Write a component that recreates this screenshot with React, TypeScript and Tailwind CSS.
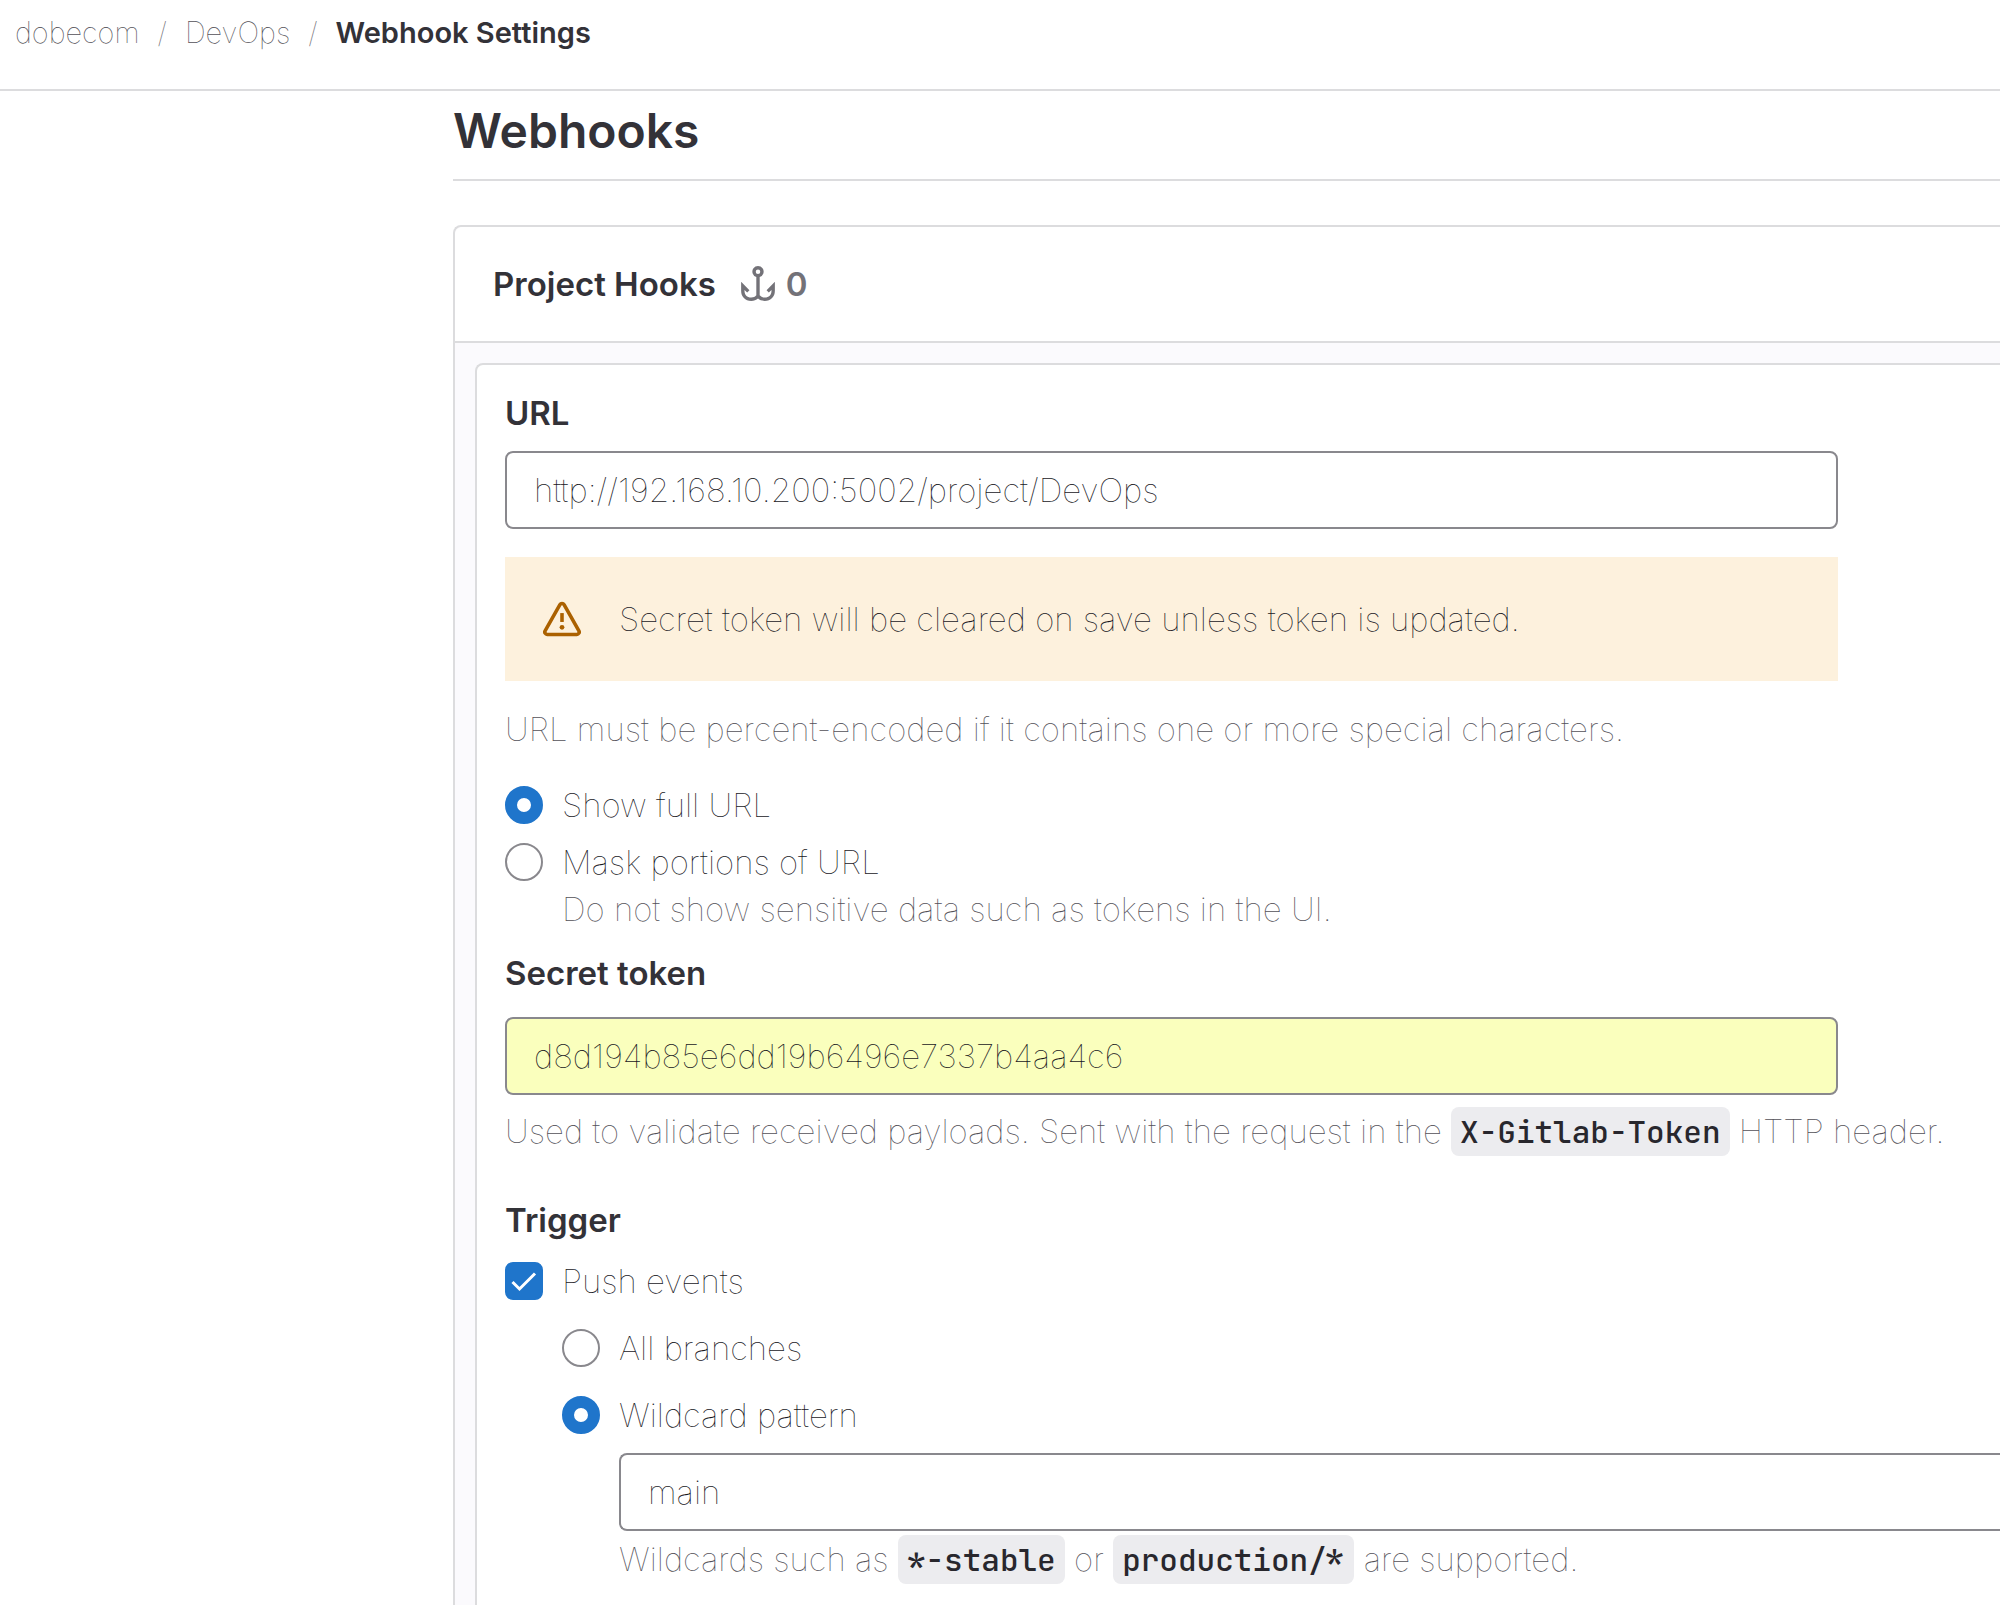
import { useState } from "react";
import type { ReactNode } from "react";

type ChoiceProps = {
  id: string;
  label: string;
  checked: boolean;
  onChange: () => void;
};

const INPUT =
  "block h-[78px] w-full border-2 border-[#89888d] px-[27px] text-[33px] font-thin text-[#18171d] outline-none";

/* ---------------- ICONS ---------------- */
function AnchorIcon() {
  return (
    <svg viewBox="0 0 16 16" className="size-9" fill="currentColor" aria-hidden="true">
      <path
        fillRule="evenodd"
        clipRule="evenodd"
        d="M8 3.5a1 1 0 1 0 0-2 1 1 0 0 0 0 2Zm.75 1.386a2.5 2.5 0 1 0-1.5 0v8.114c-.6.6-1.2 1-2.25 1-1.9 0-3-1.2-3-3v-.3l1.2 1.1 1-1L.5 7v4c0 2.7 1.8 4.5 4.5 4.5 1.2 0 2.2-.35 3-1.05.8.7 1.8 1.05 3 1.05 2.7 0 4.5-1.8 4.5-4.5V7l-3.7 3.8 1 1L14 10.7v.3c0 1.8-1.1 3-3 3-1.05 0-1.65-.4-2.25-1V4.886Z"
      />
    </svg>
  );
}

function WarningIcon() {
  return (
    <svg viewBox="0 0 16 16" className="size-[38px] shrink-0 text-[#ab6100]" fill="none" aria-hidden="true">
      <path
        d="M7.13 1.99a1 1 0 0 1 1.74 0l6.25 11a1 1 0 0 1-.87 1.5H1.75a1 1 0 0 1-.87-1.5Z"
        stroke="currentColor"
        strokeWidth="1.5"
        strokeLinejoin="round"
      />
      <path d="M8 5.5v3.75" stroke="currentColor" strokeWidth="1.5" />
      <circle cx="8" cy="11.5" r="1" fill="currentColor" />
    </svg>
  );
}

/* ---------------- CONTROLS ---------------- */
function Radio({ id, label, checked, onChange, name }: ChoiceProps & { name: string }) {
  return (
    <div className="flex h-[38px] items-center gap-[19px]">
      <input
        type="radio"
        id={id}
        name={name}
        checked={checked}
        onChange={onChange}
        className="size-[38px] shrink-0 appearance-none rounded-full border-2 border-[#89888d] bg-white checked:border-[12px] checked:border-[#1f75cb]"
      />
      <label htmlFor={id} className="font-thin text-[#18171d]">
        {label}
      </label>
    </div>
  );
}

function Checkbox({ id, label, checked, onChange }: ChoiceProps) {
  return (
    <div className="flex h-[38px] items-center gap-[19px]">
      <span className="relative size-[38px] shrink-0">
        <input
          type="checkbox"
          id={id}
          checked={checked}
          onChange={onChange}
          className="block size-[38px] appearance-none rounded-lg border-2 border-[#89888d] bg-white checked:border-[#1f75cb] checked:bg-[#1f75cb]"
        />
        {checked && (
          <svg viewBox="0 0 38 38" className="pointer-events-none absolute inset-0 size-full" fill="none" aria-hidden="true">
            <path d="M7.5 20l7 7L30 11.5" stroke="#fff" strokeWidth="3" />
          </svg>
        )}
      </span>
      <label htmlFor={id} className="font-thin text-[#18171d]">
        {label}
      </label>
    </div>
  );
}

function Code({ children }: { children: ReactNode }) {
  return (
    <code className="rounded-lg bg-[#ececef] px-[9px] py-1 font-['JetBrains_Mono','DejaVu_Sans_Mono',monospace] text-[31px] font-medium text-[#28272d]">
      {children}
    </code>
  );
}

export default function App() {
  const [url, setUrl] = useState("http://192.168.10.200:5002/project/DevOps");
  const [token, setToken] = useState("d8d194b85e6dd19b6496e7337b4aa4c6");
  const [pattern, setPattern] = useState("main");
  const [masked, setMasked] = useState(false);
  const [push, setPush] = useState(true);
  const [branches, setBranches] = useState("wildcard");

  return (
    <div className="flex min-h-screen flex-col overflow-hidden bg-white font-['Inter',sans-serif] text-[33px] leading-[48px] text-[#333238]">
      {/* BREADCRUMBS */}
      <nav className="border-b-2 border-[#dcdcde] px-[15px] pt-[9px] pb-8 text-[29px]">
        <ol className="flex gap-[18px]">
          <li>
            <a href="#dobecom" className="font-thin text-[#535158]">dobecom</a>
          </li>
          <li className="font-thin text-[#737278]">/</li>
          <li>
            <a href="#devops" className="font-thin text-[#535158]">DevOps</a>
          </li>
          <li className="font-thin text-[#737278]">/</li>
          <li>
            <a href="#webhooks" className="font-semibold">Webhook Settings</a>
          </li>
        </ol>
      </nav>

      <main className="flex flex-1 flex-col pl-[453px]">
        <h1 className="border-b-2 border-[#dcdcde] pt-[10px] pb-[18px] text-[48px] leading-[60px] font-semibold">
          Webhooks
        </h1>

        <section className="mt-11 flex flex-1 flex-col rounded-tl-lg border-t-2 border-l-2 border-[#dcdcde] bg-[#fbfafd]">
          {/* CARD HEADER */}
          <header className="flex items-center gap-6 rounded-tl-lg border-b-2 border-[#dcdcde] bg-white px-[38px] py-[33px]">
            <h2 className="font-semibold">Project Hooks</h2>
            <span className="flex items-center gap-[10px] font-semibold text-[#737278]">
              <AnchorIcon />0
            </span>
          </header>

          {/* FORM */}
          <form className="mt-5 ml-5 flex-1 rounded-tl-lg border-t-2 border-l-2 border-[#dcdcde] bg-white pt-6 pl-7">
            <label htmlFor="url" className="block font-semibold">URL</label>
            <div className="mt-[14px] max-w-[1333px]">
              <input
                id="url"
                type="text"
                value={url}
                onChange={(e) => setUrl(e.target.value)}
                className={`${INPUT} rounded-lg bg-white`}
              />
              <div role="alert" className="mt-7 flex h-[124px] items-center gap-[38px] bg-[#fdf1dd] px-[38px] font-thin text-[#18171d]">
                <WarningIcon />
                Secret token will be cleared on save unless token is updated.
              </div>
            </div>
            <p className="mt-6 font-thin text-[#535158]">
              URL must be percent-encoded if it contains one or more special characters.
            </p>

            <div className="mt-[33px] flex flex-col gap-[19px]">
              <Radio
                id="show"
                name="masking"
                label="Show full URL"
                checked={!masked}
                onChange={() => setMasked(false)}
              />
              <Radio
                id="mask"
                name="masking"
                label="Mask portions of URL"
                checked={masked}
                onChange={() => setMasked(true)}
              />
            </div>
            <p className="mt-1 pl-[57px] font-thin text-[#535158]">
              Do not show sensitive data such as tokens in the UI.
            </p>

            <label htmlFor="token" className="mt-4 block font-semibold">Secret token</label>
            <input
              id="token"
              type="text"
              value={token}
              onChange={(e) => setToken(e.target.value)}
              className={`${INPUT} mt-5 max-w-[1333px] rounded-lg bg-[#faffbd]`}
            />
            <p className="mt-3 font-thin text-[#535158]">
              Used to validate received payloads. Sent with the request in the{" "}
              <Code>X-Gitlab-Token</Code> HTTP header.
            </p>

            {/* TRIGGERS */}
            <fieldset className="mt-10">
              <legend className="font-semibold">Trigger</legend>
              <div className="mt-[18px]">
                <Checkbox id="push" label="Push events" checked={push} onChange={() => setPush(!push)} />
              </div>
              <div className="mt-[29px] flex flex-col gap-[29px] pl-[57px]">
                <Radio
                  id="all"
                  name="branches"
                  label="All branches"
                  checked={branches === "all"}
                  onChange={() => setBranches("all")}
                />
                <Radio
                  id="wildcard"
                  name="branches"
                  label="Wildcard pattern"
                  checked={branches === "wildcard"}
                  onChange={() => setBranches("wildcard")}
                />
              </div>
              <div className="mt-[19px] pl-[114px]">
                <input
                  type="text"
                  aria-label="Wildcard pattern"
                  value={pattern}
                  onChange={(e) => setPattern(e.target.value)}
                  className={`${INPUT} rounded-l-lg border-r-0 bg-white`}
                />
                <p className="mt-1 font-thin text-[#535158]">
                  Wildcards such as <Code>*-stable</Code> or <Code>production/*</Code> are supported.
                </p>
              </div>
            </fieldset>
          </form>
        </section>
      </main>
    </div>
  );
}
